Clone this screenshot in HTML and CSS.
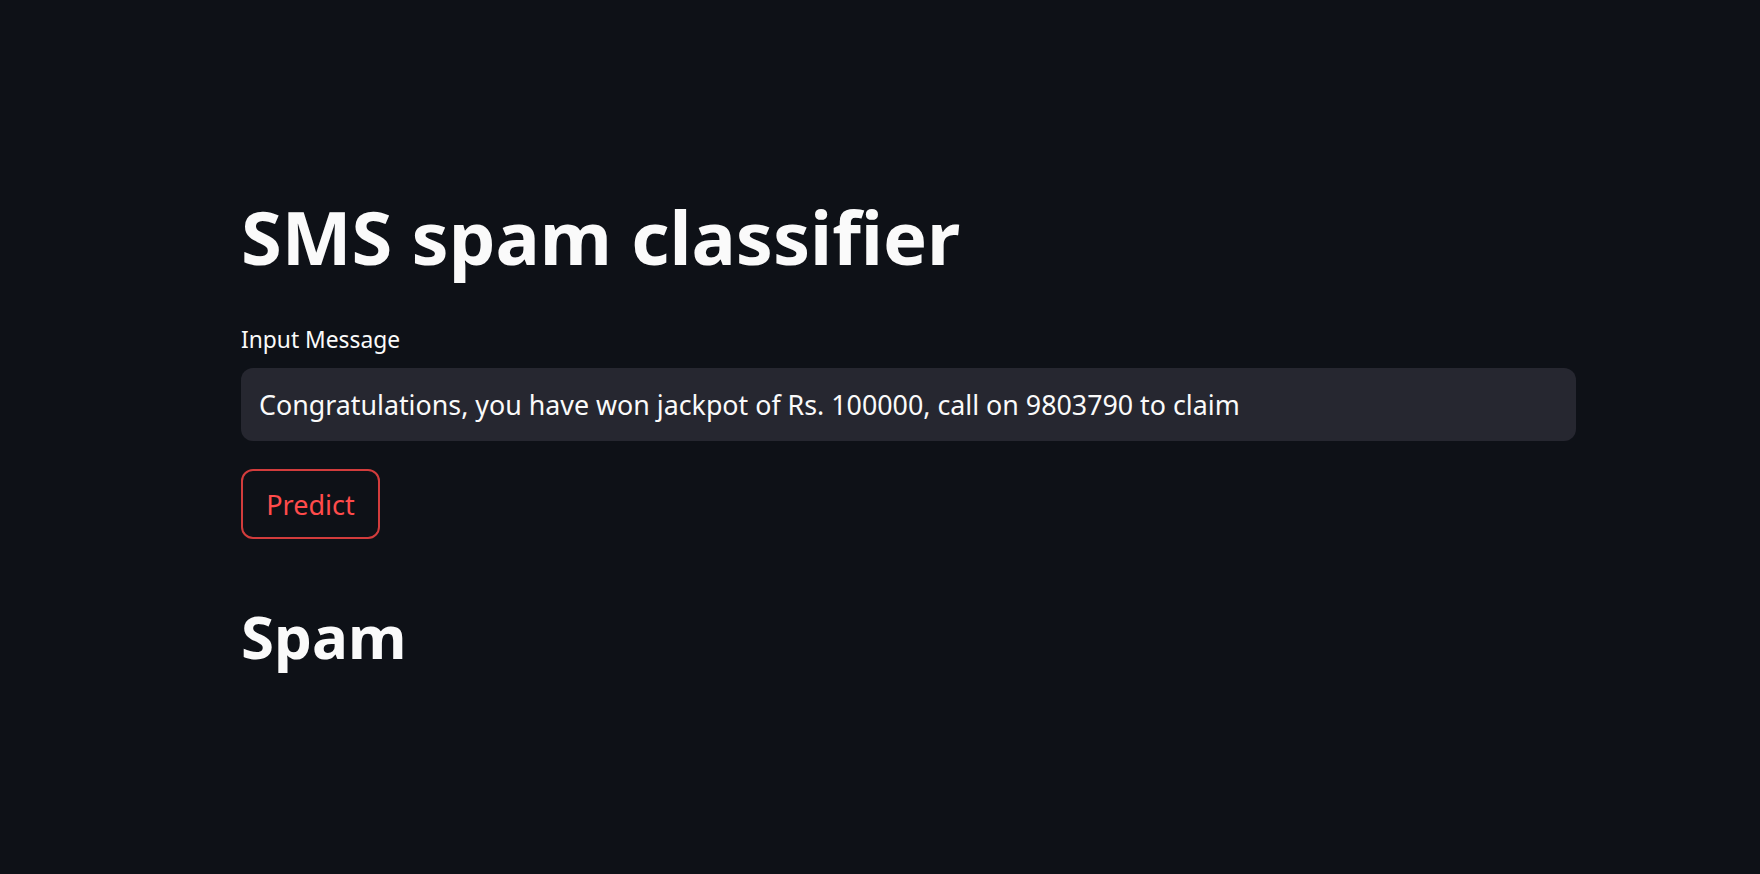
FILE: index.html
```html
<!DOCTYPE html>
<html lang="en">
<head>
<meta charset="utf-8">
<title>SMS spam classifier</title>
<link rel="stylesheet" href="styles.css">
</head>
<body>
<main class="app">
  <div class="block">
    <h1 class="title">SMS spam classifier</h1>
    <label class="field-label" for="msg">Input Message</label>
    <div class="input-box">
      <input id="msg" class="text-input" type="text" value="Congratulations, you have won jackpot of Rs. 100000, call on 9803790 to claim">
    </div>
    <button class="btn" type="button">Predict</button>
    <h2 class="result">Spam</h2>
  </div>
</main>
</body>
</html>
```

FILE: styles.css
```css
* { box-sizing: border-box; }
html, body {
  margin: 0;
  padding: 0;
  background: #0e1117;
  height: 100%;
}
body {
  font-family: "Noto Sans", "Lato", "Liberation Sans", sans-serif;
  color: #fafafa;
}
.app {
  padding: 194px 184px 0 241px;
}
.block {
  display: flex;
  flex-direction: column;
  align-items: flex-start;
  width: 1335px;
}
.title {
  margin: 0;
  font-size: 74px;
  line-height: 86px;
  font-weight: 700;
  color: #fafafa;
}
.field-label {
  margin-top: 45px;
  font-size: 22.8px;
  line-height: 29px;
  color: #fafafa;
}
.input-box {
  margin-top: 14px;
  width: 1335px;
  height: 73px;
  background: #262730;
  border-radius: 12px;
  display: flex;
  align-items: center;
  padding: 0 18px;
}
.text-input {
  width: 100%;
  border: 0;
  outline: 0;
  background: transparent;
  color: #fafafa;
  font-family: inherit;
  font-size: 26.8px;
  padding: 0;
}
.btn {
  margin-top: 28px;
  width: 139px;
  height: 70px;
  background: transparent;
  border: 2px solid #d23c3c;
  border-radius: 12px;
  color: #ff4b4b;
  font-family: inherit;
  font-size: 27px;
  padding: 0;
}
.result {
  margin: 60px 0 0;
  font-size: 60px;
  line-height: 74px;
  font-weight: 700;
  color: #fafafa;
}
```
